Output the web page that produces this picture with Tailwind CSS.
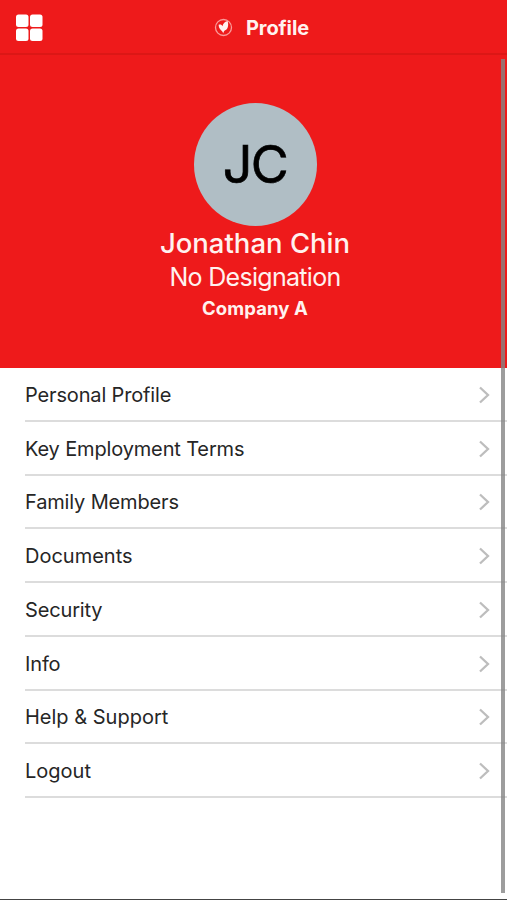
<!DOCTYPE html>
<html lang="en">
<head>
<meta charset="utf-8">
<title>Profile</title>
<script src="https://cdn.jsdelivr.net/npm/@tailwindcss/browser@4"></script>
</head>
<body class="relative h-[900px] w-[507px] overflow-hidden bg-white font-['Inter',sans-serif] text-[#262626]">
<div class="flex h-full flex-col border-b border-[#444]">
  <header class="relative flex h-[55px] shrink-0 items-center justify-center border-b-2 border-[#dc1716] bg-[#ee1a1b] text-white">
    <button class="absolute left-[15px] top-[14px]" aria-label="Menu">
      <svg width="29" height="29" viewBox="0 0 29 29" fill="#fff"><rect x="1" y=".5" width="12.5" height="12.5" rx="2.5"/><rect x="15" y=".5" width="12.5" height="12.5" rx="2.5"/><rect x="1" y="14.5" width="12.5" height="12.5" rx="2.5"/><rect x="15" y="14.5" width="12.5" height="12.5" rx="2.5"/></svg>
    </button>
    <div class="flex items-center gap-[13px] pl-[16px] pt-[2px]">
      <svg width="19" height="19" viewBox="0 0 19 19"><circle cx="9.5" cy="9.5" r="8" fill="none" stroke="#fa9a98" stroke-width="1.3"/><path d="M9.200 15.500C8.800 12.500 4.800 12 4.600 6.800C6.500 6 7.800 6.700 8.500 8.200C9 5.500 10.500 4 13.600 3C14.900 7.500 14 11 11.200 12.200C10 12.900 9.600 14 9.200 15.500Z" fill="#fff0f0"/></svg>
      <h1 class="text-[20px] font-bold leading-6 tracking-[-0.1px] text-[#fff2ef]">Profile</h1>
    </div>
  </header>
  <section class="flex h-[313px] shrink-0 flex-col items-center bg-[#ee1a1b] pl-[3px] pt-[48px] text-[#fff2ef]">
    <div class="flex size-[123px] items-center justify-center rounded-full bg-[#b0bec5] text-[52px] leading-none tracking-[-1.5px] text-black"><span class="[-webkit-text-stroke:0.7px_black]">JC</span></div>
    <h2 class="text-[27.500px] font-medium leading-[34px]">Jonathan Chin</h2>
    <p class="mt-px text-[25px] leading-8 tracking-[-0.7px]">No Designation</p>
    <p class="mt-[3px] text-[18.500px] font-bold leading-[25px] tracking-[0.1px]">Company A</p>
  </section>
  <nav class="flex h-[430px] shrink-0 flex-col pl-[25px] text-[20px] tracking-[-0.15px]">
    <a class="flex flex-1 items-center justify-between border-b-2 border-[#dcdcdc] pr-[16px] pt-[2px]"><span>Personal Profile</span><svg width="13" height="18" viewBox="0 0 13 18" fill="none" stroke="#bdbdbd" stroke-width="2.300"><path d="M2 1.500L10 9L2 16.500"/></svg></a>
    <a class="flex flex-1 items-center justify-between border-b-2 border-[#dcdcdc] pr-[16px] pt-[2px]"><span>Key Employment Terms</span><svg width="13" height="18" viewBox="0 0 13 18" fill="none" stroke="#bdbdbd" stroke-width="2.300"><path d="M2 1.500L10 9L2 16.500"/></svg></a>
    <a class="flex flex-1 items-center justify-between border-b-2 border-[#dcdcdc] pr-[16px] pt-[2px]"><span>Family Members</span><svg width="13" height="18" viewBox="0 0 13 18" fill="none" stroke="#bdbdbd" stroke-width="2.300"><path d="M2 1.500L10 9L2 16.500"/></svg></a>
    <a class="flex flex-1 items-center justify-between border-b-2 border-[#dcdcdc] pr-[16px] pt-[2px]"><span class="tracking-normal">Documents</span><svg width="13" height="18" viewBox="0 0 13 18" fill="none" stroke="#bdbdbd" stroke-width="2.300"><path d="M2 1.500L10 9L2 16.500"/></svg></a>
    <a class="flex flex-1 items-center justify-between border-b-2 border-[#dcdcdc] pr-[16px] pt-[2px]"><span>Security</span><svg width="13" height="18" viewBox="0 0 13 18" fill="none" stroke="#bdbdbd" stroke-width="2.300"><path d="M2 1.500L10 9L2 16.500"/></svg></a>
    <a class="flex flex-1 items-center justify-between border-b-2 border-[#dcdcdc] pr-[16px] pt-[2px]"><span>Info</span><svg width="13" height="18" viewBox="0 0 13 18" fill="none" stroke="#bdbdbd" stroke-width="2.300"><path d="M2 1.500L10 9L2 16.500"/></svg></a>
    <a class="flex flex-1 items-center justify-between border-b-2 border-[#dcdcdc] pr-[16px] pt-[2px]"><span class="tracking-normal">Help &amp; Support</span><svg width="13" height="18" viewBox="0 0 13 18" fill="none" stroke="#bdbdbd" stroke-width="2.300"><path d="M2 1.500L10 9L2 16.500"/></svg></a>
    <a class="flex flex-1 items-center justify-between border-b-2 border-[#dcdcdc] pr-[16px] pt-[2px]"><span class="tracking-normal">Logout</span><svg width="13" height="18" viewBox="0 0 13 18" fill="none" stroke="#bdbdbd" stroke-width="2.300"><path d="M2 1.500L10 9L2 16.500"/></svg></a>
  </nav>
</div>
<div class="absolute right-[2px] top-[59px] h-[834px] w-[4px] bg-[#858585]/80"></div>
</body>
</html>
